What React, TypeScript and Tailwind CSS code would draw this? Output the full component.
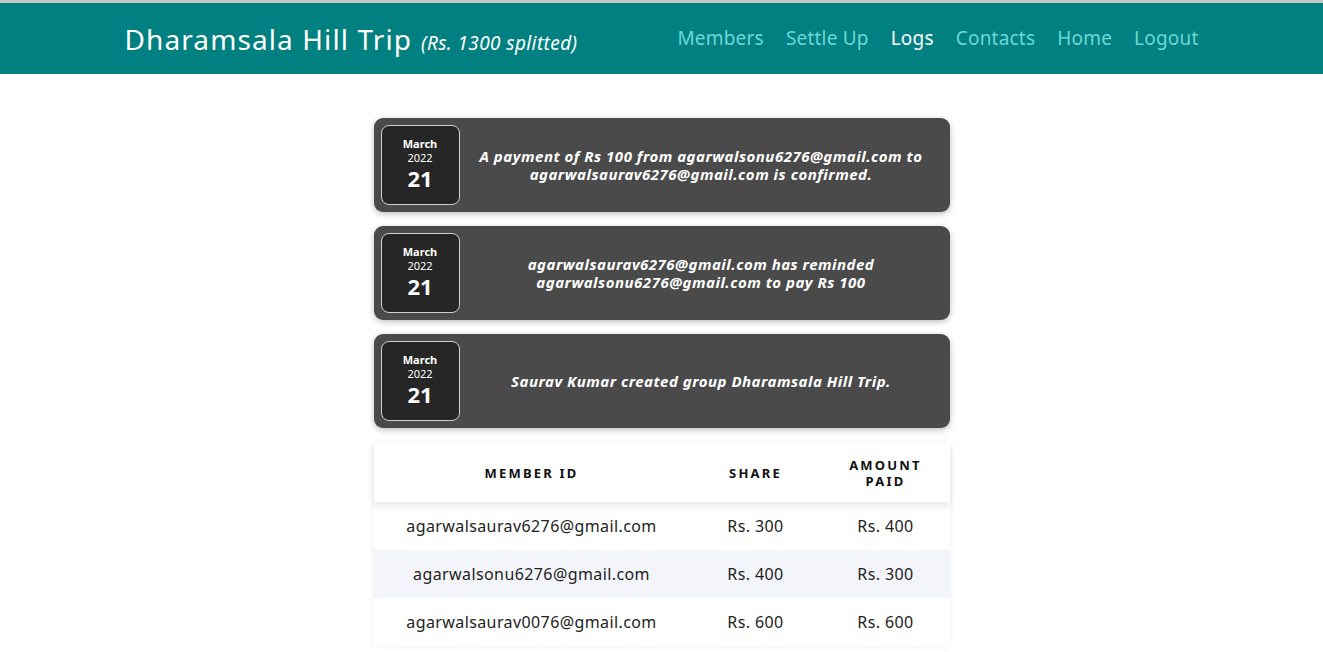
import React from "react";

const logs = [
  {
    text: (
      <>
        A payment of Rs 100 from agarwalsonu6276@gmail.com to
        <br />
        agarwalsaurav6276@gmail.com is confirmed.
      </>
    ),
  },
  {
    text: (
      <>
        agarwalsaurav6276@gmail.com has reminded
        <br />
        agarwalsonu6276@gmail.com to pay Rs 100
      </>
    ),
  },
  { text: <>Saurav Kumar created group Dharamsala Hill Trip.</> },
];

const rows = [
  ["agarwalsaurav6276@gmail.com", "Rs. 300", "Rs. 400"],
  ["agarwalsonu6276@gmail.com", "Rs. 400", "Rs. 300"],
  ["agarwalsaurav0076@gmail.com", "Rs. 600", "Rs. 600"],
];

export default function App() {
  return (
    <div className="min-h-[652px] bg-white font-['Noto_Sans',sans-serif]">
      <div className="h-[3px] bg-[#c8c8c8]" />
      <header className="h-[71px] bg-[#008080]">
        <div className="mx-auto flex h-full w-[1074px] items-center justify-between">
          <div className="flex items-baseline gap-[9px] pt-[1px] text-white">
            <span className="text-[28px] leading-none tracking-[1.1px]">Dharamsala Hill Trip</span>
            <span className="text-[19px] italic leading-none tracking-[0.4px]">(Rs. 1300 splitted)</span>
          </div>
          <nav className="flex items-center gap-[22px] text-[19px] tracking-[0.2px] text-[#6ad8d8]">
            <span>Members</span>
            <span>Settle Up</span>
            <span className="text-white">Logs</span>
            <span>Contacts</span>
            <span>Home</span>
            <span>Logout</span>
          </nav>
        </div>
      </header>

      <main className="mx-auto flex w-[576px] flex-col gap-[14px] pt-[44px]">
        {logs.map((l, i) => (
          <div
            key={i}
            className="flex h-[94px] items-center rounded-[9px] bg-[#4a4a4a] px-[7px] shadow-[0_2px_6px_rgba(0,0,0,0.25)]"
          >
            <div className="flex h-[80px] w-[79px] shrink-0 flex-col items-center justify-center rounded-[8px] border border-[#d0d0d0] bg-[#262626] pb-[1px] text-white">
              <span className="text-[11px] font-bold leading-[14px]">March</span>
              <span className="text-[11px] leading-[13px]">2022</span>
              <span className="text-[22px] font-bold leading-[28px]">21</span>
            </div>
            <div className="flex-1 px-[6px] text-center text-[15px] font-bold italic leading-[18px] tracking-[0.5px] text-white">
              {l.text}
            </div>
          </div>
        ))}

        <div className="mb-[6px] mt-[1px] bg-white shadow-[0_0_6px_rgba(40,50,90,0.08)]">
          <div className="relative z-10 grid h-[59px] grid-cols-[316px_132px_128px] items-center bg-white text-center text-[13px] font-bold uppercase leading-[16px] tracking-[2.2px] text-[#111] shadow-[0_4px_7px_rgba(40,50,90,0.1)]">
            <div>Member ID</div>
            <div>Share</div>
            <div>
              Amount
              <br />
              Paid
            </div>
          </div>
          {rows.map((r, i) => (
            <div
              key={i}
              className={`grid h-[48px] grid-cols-[316px_132px_128px] items-center text-center text-[16px] tracking-[0.4px] text-[#222] ${
                i === 1 ? "bg-[#f4f5fa]" : "bg-white"
              }`}
            >
              <div>{r[0]}</div>
              <div>{r[1]}</div>
              <div>{r[2]}</div>
            </div>
          ))}
        </div>
      </main>
    </div>
  );
}
